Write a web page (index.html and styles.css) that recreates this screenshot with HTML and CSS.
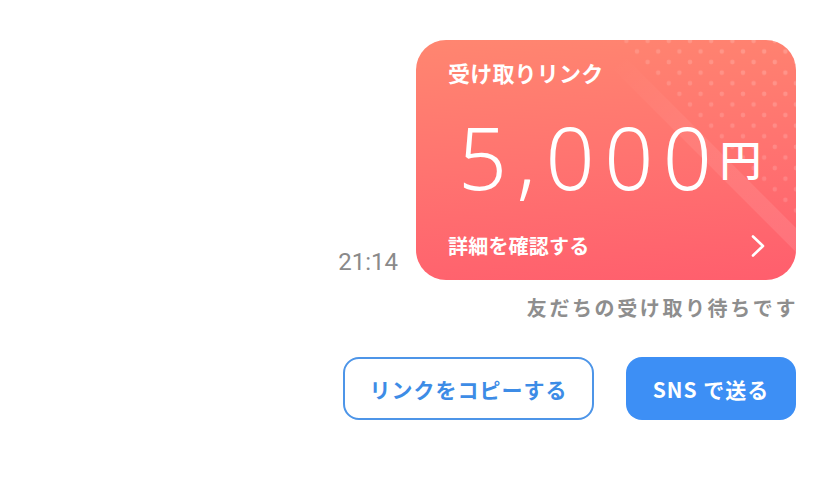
FILE: index.html
```html
<!DOCTYPE html>
<html lang="ja">
<head>
<meta charset="utf-8">
<link rel="stylesheet" href="styles.css">
</head>
<body>
<main class="thread">
  <div class="msg-row">
    <span class="time">21:14</span>
    <div class="card">
      <svg class="card-deco" width="380" height="240" viewBox="0 0 380 240" aria-hidden="true">
        <defs>
          <pattern id="dots" width="21.2" height="21.2" patternUnits="userSpaceOnUse" patternTransform="translate(-1.6 0.9)">
            <circle cx="0" cy="0" r="2.3" fill="#fff"/>
            <circle cx="21.2" cy="0" r="2.3" fill="#fff"/>
            <circle cx="0" cy="21.2" r="2.3" fill="#fff"/>
            <circle cx="21.2" cy="21.2" r="2.3" fill="#fff"/>
            <circle cx="10.6" cy="10.6" r="2.3" fill="#fff"/>
          </pattern>
          <linearGradient id="fade" x1="1" y1="0" x2="0" y2="1">
            <stop offset="0" stop-color="#fff" stop-opacity="1"/>
            <stop offset="1" stop-color="#fff" stop-opacity="0.35"/>
          </linearGradient>
          <mask id="m">
            <polygon points="196,0 380,0 380,184" fill="url(#fade)"/>
          </mask>
          <linearGradient id="band" gradientUnits="userSpaceOnUse" x1="200" y1="20" x2="370" y2="200">
            <stop offset="0" stop-color="#fff" stop-opacity="0"/>
            <stop offset="0.45" stop-color="#fff" stop-opacity="0.07"/>
            <stop offset="1" stop-color="#fff" stop-opacity="0.1"/>
          </linearGradient>
        </defs>
        <rect width="380" height="240" fill="url(#dots)" opacity="0.2" mask="url(#m)"/>
        <polygon points="168,0 192,0 380,188 380,212" fill="url(#band)"/>
      </svg>
      <div class="card-title">受け取りリンク</div>
      <div class="amount">
        <span class="amount-num">5,000</span>
        <span class="amount-unit">円</span>
      </div>
      <div class="card-foot">
        <span class="foot-text">詳細を確認する</span>
        <svg class="chev" width="16" height="24" viewBox="0 0 16 24" aria-hidden="true">
          <polyline points="3,2.5 13,12 3,21.5" fill="none" stroke="#fff" stroke-width="2.6" stroke-linecap="round" stroke-linejoin="round"/>
        </svg>
      </div>
    </div>
  </div>
  <p class="status">友だちの受け取り待ちです</p>
  <div class="actions">
    <button class="btn btn-outline">リンクをコピーする</button>
    <button class="btn btn-fill">SNS で送る</button>
  </div>
</main>
</body>
</html>
```

FILE: styles.css
```css
html, body {
  margin: 0;
  padding: 0;
  background: #ffffff;
}

body {
  font-family: "Noto Sans CJK JP", "Noto Sans", sans-serif;
}

.thread {
  display: flex;
  flex-direction: column;
  align-items: flex-end;
  padding: 40px 32px 0 0;
}

.msg-row {
  display: flex;
  align-items: flex-end;
  gap: 18px;
}

.time {
  font-family: Roboto, "Liberation Sans", sans-serif;
  font-size: 24px;
  line-height: 24px;
  color: #8a8a8a;
  margin-bottom: 6px;
}

.card {
  position: relative;
  width: 380px;
  height: 240px;
  box-sizing: border-box;
  border-radius: 30px;
  overflow: hidden;
  background: linear-gradient(175deg, #ff8670 0%, #ff7370 50%, #ff5e6d 100%);
  color: #ffffff;
  display: flex;
  flex-direction: column;
  padding: 17px 30px 0 32px;
}

.card-deco {
  position: absolute;
  left: 0;
  top: 0;
}

.card-title {
  position: relative;
  font-size: 22px;
  line-height: 30px;
  font-weight: 700;
  letter-spacing: 0.2px;
}

.amount {
  position: relative;
  display: flex;
  align-items: baseline;
  margin-top: 19.5px;
  padding-left: 10px;
  height: 100px;
}

.amount-num {
  font-family: "Noto Sans", "Open Sans", sans-serif;
  font-weight: 300;
  font-size: 86px;
  line-height: 100px;
  letter-spacing: 9.5px;
}

.amount-unit {
  font-size: 42px;
  font-weight: 500;
  margin-left: -2px;
  position: relative;
  top: -14px;
}

.card-foot {
  position: relative;
  display: flex;
  justify-content: space-between;
  align-items: center;
  margin-top: auto;
  margin-bottom: 21px;
}

.foot-text {
  font-size: 20px;
  line-height: 26px;
  font-weight: 700;
  letter-spacing: 0.2px;
}

.chev {
  display: block;
}

.status {
  margin: 14px 0 0 0;
  font-size: 20px;
  line-height: 28px;
  font-weight: 700;
  color: #8e8e8e;
  letter-spacing: 2.6px;
  margin-right: -2px;
}

.actions {
  display: flex;
  gap: 32px;
  margin-top: 35px;
}

.btn {
  font-family: "Noto Sans CJK JP", sans-serif;
  font-size: 21px;
  font-weight: 700;
  letter-spacing: 1px;
  height: 63px;
  border-radius: 16px;
  box-sizing: border-box;
  cursor: pointer;
  padding: 0;
}

.btn-outline {
  width: 251px;
  background: #ffffff;
  border: 2px solid #4d95e8;
  color: #3d8ce6;
}

.btn-fill {
  width: 170px;
  background: #3d8ff5;
  border: none;
  color: #ffffff;
}
```
